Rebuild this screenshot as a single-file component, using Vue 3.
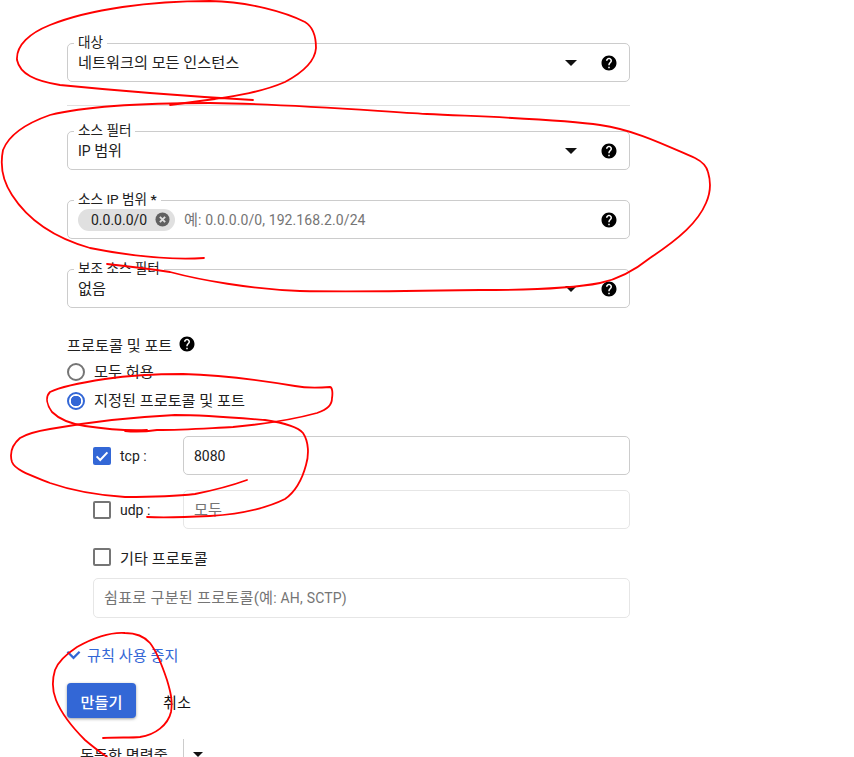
<script setup>
const helpPath = 'M12 2C6.48 2 2 6.48 2 12s4.48 10 10 10 10-4.48 10-10S17.52 2 12 2zm1 17h-2v-2h2v2zm2.07-7.75l-.9.92C13.45 12.9 13 13.5 13 15h-2v-.5c0-1.1.45-2.1 1.17-2.83l1.24-1.26c.37-.36.59-.86.59-1.41 0-1.1-.9-2-2-2s-2 .9-2 2H8c0-2.21 1.79-4 4-4s4 1.79 4 4c0 .88-.36 1.68-.93 2.25z'

// red marker strokes drawn over the page
const scribbles = [
  'M253 100 C200 97 130 92 60 85 C35 81 20 74 17 60 C16 45 30 33 50 25 C90 9 150 1 210 1 C250 2 285 12 305 22 C315 28 316 40 316 48 C315 62 300 74 285 82 C262 92 235 96 215 99 C200 101 185 103 170 105',
  'M204 258 C170 260 130 256 90 248 C55 238 28 220 12 195 C2 180 0 165 3 150 C10 132 30 122 50 115 C90 105 150 103 210 103 C290 104 360 110 427 114 C490 117 560 119 600 125 C635 130 665 145 695 158 C705 163 707 168 708 172 C711 182 711 192 706 203 C698 222 680 238 650 258 C635 270 620 279 600 283 C570 289 520 290 480 290 C420 291 350 292 300 291 C250 289 200 280 170 272 C150 269 125 266 107 264',
  'M125 431 C135 432 150 431 157 430 C185 430 210 428 233 427 C265 424 295 419 317 413 C328 409 332 405 332 398 C333 392 332 387 330 387 C318 388 305 388 295 386 C260 380 220 375 183 374 C150 374 125 376 105 379 C85 382 60 387 50 392 C45 397 47 405 52 412 C60 420 72 424 85 426 C105 429 125 431 147 430',
  'M247 480 C225 488 210 491 195 494 C170 497 145 497 125 497 C95 495 70 490 50 483 C30 475 15 470 12 462 C9 452 12 445 20 438 C28 433 38 431 50 429 C90 422 130 417 175 415 C205 415 240 418 265 420 C285 423 298 427 303 433 C309 442 309 455 306 465 C302 480 295 492 285 499 C265 509 240 514 210 516 C190 517 165 518 147 517',
  'M103 738 C118 737 130 738 140 737 C155 735 168 725 171 712 C173 700 170 690 167 680 C162 665 157 652 150 643 C143 635 135 633 125 633 C110 632 95 637 77 647 C65 655 58 662 55 670 C52 680 52 690 56 700 C62 715 72 727 85 740 C92 746 100 752 107 757'
]
</script>

<template>
  <div class="page">
    <form class="form" @submit.prevent>
      <div class="field">
        <span class="label">대상</span>
        <span class="value ko">네트워크의 모든 인스턴스</span>
        <i class="arrow"></i>
        <svg class="help" viewBox="0 0 24 24"><path :d="helpPath" /></svg>
      </div>

      <hr class="divider" />

      <div class="field">
        <span class="label">소스 필터</span>
        <span class="value">IP <span class="ko">범위</span></span>
        <i class="arrow"></i>
        <svg class="help" viewBox="0 0 24 24"><path :d="helpPath" /></svg>
      </div>

      <div class="field gap">
        <span class="label"><span class="ko-label">소스</span> IP <span class="ko-label">범위</span> <b>*</b></span>
        <span class="chip">
          0.0.0.0/0
          <svg class="chip-x" viewBox="0 0 16 16">
            <circle cx="8" cy="8" r="7.5" fill="#616161" />
            <path d="M5.2 5.2l5.6 5.6M10.8 5.2l-5.6 5.6" stroke="#e0e0e0" stroke-width="2" />
          </svg>
        </span>
        <span class="value hint"><span class="ko">예</span>: 0.0.0.0/0, 192.168.2.0/24</span>
        <svg class="help" viewBox="0 0 24 24"><path :d="helpPath" /></svg>
      </div>

      <div class="field gap">
        <span class="label">보조 소스 필터</span>
        <span class="value ko">없음</span>
        <i class="arrow"></i>
        <svg class="help" viewBox="0 0 24 24"><path :d="helpPath" /></svg>
      </div>

      <div class="proto-title ko">
        프로토콜 및 포트
        <svg class="help small" viewBox="0 0 24 24"><path :d="helpPath" /></svg>
      </div>

      <div class="radio-row first ko">
        <span class="radio"></span>
        모두 허용
      </div>
      <div class="radio-row ko">
        <span class="radio on"></span>
        지정된 프로토콜 및 포트
      </div>

      <div class="proto-list">
        <div class="check-row">
          <span class="check on">
            <svg viewBox="0 0 18 18"><path d="M3.6 9.4l3.6 3.6 7.2-7.6" fill="none" stroke="#fff" stroke-width="2" /></svg>
          </span>
          <span class="check-label">tcp :</span>
          <div class="box">8080</div>
        </div>
        <div class="check-row next">
          <span class="check"></span>
          <span class="check-label">udp :</span>
          <div class="box off ko">모두</div>
        </div>
        <div class="other-row ko">
          <span class="check"></span>
          <span>기타 프로토콜</span>
        </div>
        <div class="box off wide"><span class="ko">쉼표로 구분된 프로토콜(예</span>: AH, SCTP)</div>
      </div>

      <div class="toggle ko">
        <svg class="chevron" viewBox="0 0 16 10"><path d="M1.5 1.5L8 8l6.5-6.5" fill="none" stroke="#3367d6" stroke-width="2.4" /></svg>
        규칙 사용 중지
      </div>

      <div class="actions">
        <button class="primary ko" type="button">만들기</button>
        <button class="plain ko" type="button">취소</button>
      </div>

      <div class="cmd ko">
        <span>동등한 명령줄</span>
        <i class="cmd-sep"></i>
        <i class="arrow cmd-arrow"></i>
      </div>
    </form>

    <svg class="marker" viewBox="0 0 854 757">
      <path v-for="(d, i) in scribbles" :key="i" :d="d" />
    </svg>
  </div>
</template>

<style scoped>
.page
{
  position: relative;
  width: 854px;
  height: 757px;
  overflow: hidden;
  background: #fff;
  font-family: Roboto, "Noto Sans CJK KR", sans-serif;
  font-size: 14px;
  color: #212121;
}

/* hangul runs come out narrower than the reference at 14px */
.ko { font-size: 15.2px; }

.ko-label { font-size: 13.6px; }

.form
{
  width: 563px;
  margin-left: 67px;
  padding-top: 43px;
}

.field
{
  position: relative;
  display: flex;
  align-items: center;
  box-sizing: border-box;
  height: 39px;
  padding: 0 11px 0 10px;
  border: 1px solid #ccc;
  border-radius: 5px;
}

.field.gap { margin-top: 30px; }

.label
{
  position: absolute;
  top: -11px;
  left: 6px;
  padding: 0 4px;
  background: #fff;
  font-size: 13.6px;
  line-height: 18px;
  color: #212121;
}

.label b { font-weight: 700; }

.value
{
  flex: 1;
  padding-bottom: 3px;
}

.hint
{
  margin-left: 9px;
  color: #757575;
  letter-spacing: 0.1px;
}

.arrow
{
  width: 0;
  height: 0;
  margin-right: 23px;
  border-left: 6px solid transparent;
  border-right: 6px solid transparent;
  border-top: 6px solid #111;
}

.help
{
  flex: none;
  width: 18px;
  height: 18px;
  fill: #000;
}

.divider
{
  margin: 23px 0 25px;
  border: 0;
  border-top: 1px solid #e0e0e0;
}

.chip
{
  display: flex;
  align-items: center;
  flex: none;
  box-sizing: border-box;
  width: 97px;
  height: 22px;
  padding: 0 5px 0 13px;
  justify-content: space-between;
  border-radius: 11px;
  background: #e0e0e0;
}

.chip-x { width: 15px; height: 15px; }

.proto-title
{
  display: flex;
  align-items: center;
  gap: 6px;
  height: 20px;
  margin-top: 26px;
}

.help.small { margin: 0; }

.radio-row
{
  display: flex;
  align-items: center;
  gap: 9px;
  height: 20px;
  margin-top: 9px;
  line-height: 18px;
}

.radio-row.first { margin-top: 8px; }

.radio
{
  flex: none;
  box-sizing: border-box;
  width: 18px;
  height: 18px;
  border: 2px solid #757575;
  border-radius: 50%;
}

.radio.on
{
  border-color: #3367d6;
  background: radial-gradient(circle, #3367d6 0 5px, transparent 5.5px);
}

.proto-list
{
  margin-top: 25px;
  padding-left: 26px;
}

.check-row
{
  display: flex;
  align-items: center;
  height: 39px;
}

.check-row.next { margin-top: 15px; }

.check
{
  display: block;
  flex: none;
  box-sizing: border-box;
  width: 18px;
  height: 18px;
  border: 2px solid #757575;
  border-radius: 2px;
}

.check.on
{
  border: 0;
  background: #3367d6;
}

.check.on svg { display: block; }

.check-label
{
  width: 63px;
  margin-left: 9px;
}

.box
{
  flex: 1;
  box-sizing: border-box;
  height: 39px;
  padding: 0 10px;
  border: 1px solid #ccc;
  border-radius: 5px;
  line-height: 38px;
}

.box.off
{
  border-color: #e6e6e6;
  color: #757575;
}

.box.wide
{
  height: 40px;
  margin-top: 11px;
  line-height: 39px;
  letter-spacing: 0.2px;
}

.other-row
{
  display: flex;
  align-items: center;
  gap: 9px;
  height: 20px;
  margin-top: 18px;
}

.toggle
{
  display: flex;
  align-items: center;
  gap: 6px;
  height: 20px;
  margin-top: 26px;
  margin-left: -1px;
  color: #3367d6;
}

.chevron
{
  width: 15px;
  height: 10px;
  margin-top: 2px;
}

.actions
{
  display: flex;
  align-items: center;
  gap: 27px;
  margin-top: 19px;
}

.primary,
.plain
{
  border: 0;
  font-family: inherit;
}

.primary
{
  width: 69px;
  height: 35px;
  padding: 0;
  border-radius: 4px;
  background: #3367d6;
  color: #fff;
  font-weight: 500;
  box-shadow: 0 1px 3px rgba(60, 64, 67, 0.5);
}

.plain
{
  padding: 0;
  background: none;
  color: #111;
}

.cmd
{
  display: flex;
  align-items: center;
  height: 30px;
  margin-top: 21px;
  padding-left: 13px;
}

.cmd span { width: 103px; white-space: nowrap; }

.cmd-sep
{
  width: 1px;
  height: 30px;
  background: #ccc;
}

.cmd-arrow
{
  margin: 0 0 0 9px;
  border-left-width: 5px;
  border-right-width: 5px;
  border-top-width: 5px;
}

.marker
{
  position: absolute;
  top: 0;
  left: 0;
  width: 854px;
  height: 757px;
  pointer-events: none;
}

.marker path
{
  fill: none;
  stroke: #f00;
  stroke-width: 1.8;
  stroke-linecap: round;
}
</style>
